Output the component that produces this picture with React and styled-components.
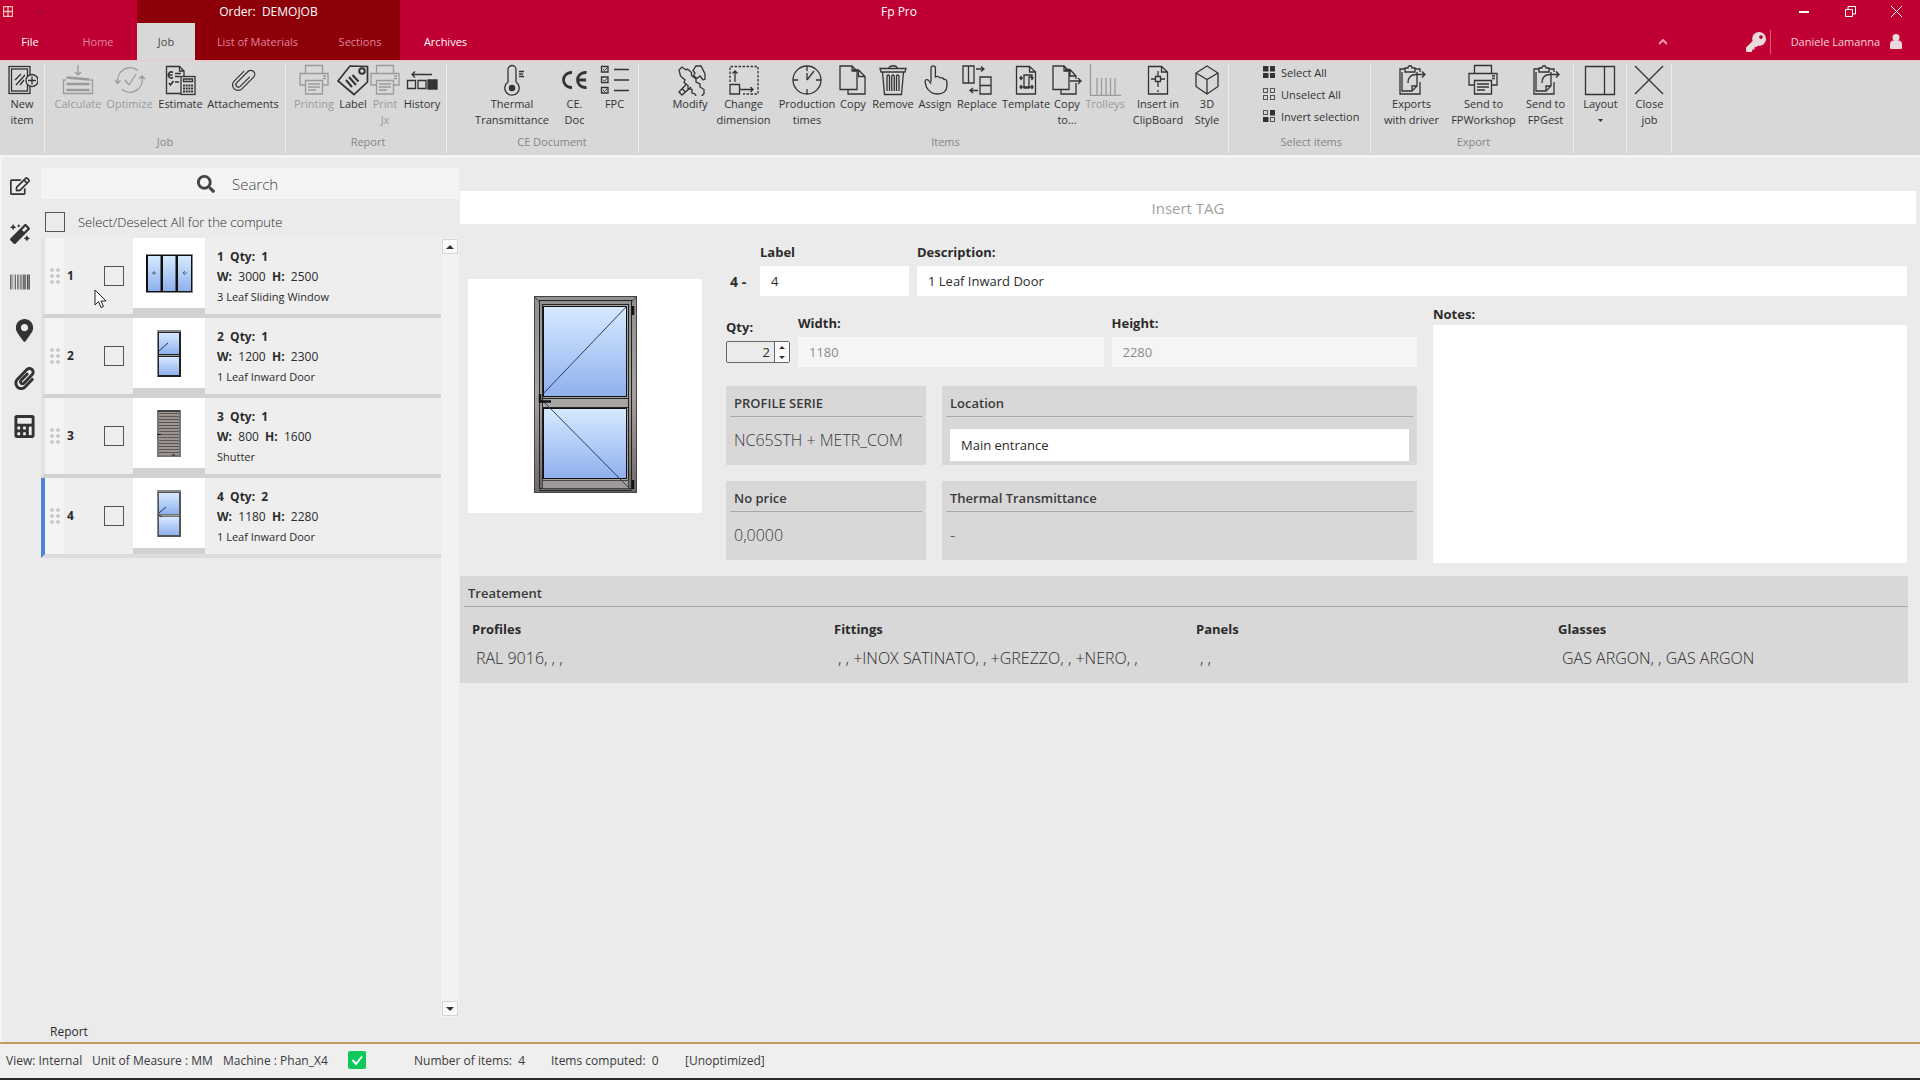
import React, { useState } from 'react';
import styled, { createGlobalStyle } from 'styled-components';
import { FaRegEdit, FaMagic, FaBarcode, FaMapMarkerAlt, FaPaperclip, FaCalculator, FaSearch, FaKey } from 'react-icons/fa';

const GlobalStyle = createGlobalStyle`
    * {
        box-sizing : border-box;
    }
    body {
        margin : 0;
        background : #ebebeb;
        color : #2b2b2b;
        font-family : "Open Sans", "Noto Sans", sans-serif;
        font-size : 12px;
    }
    button, input, textarea {
        font : inherit;
        color : inherit;
        border : 0;
        margin : 0;
        padding : 0;
        background : none;
        border-radius : 0;
        outline : 0;
    }
`;

const Page = styled.div`
    display : flex;
    flex-direction : column;
    min-height : 100vh;
`;

/* ---------- header ---------- */

const Header = styled.header`
    display : grid;
    grid-template-columns : 137px 263px 1fr;
    height : 60px;
    background : #c00032;
    color : #fff;
`;

const HeaderPart = styled.div`
    display : flex;
    flex-direction : column;
    background : ${props => (props.$dark ? "#8d000a" : "transparent")};
`;

const TitleLine = styled.div`
    display : flex;
    align-items : center;
    justify-content : ${props => props.$justify || "flex-start"};
    height : 23px;
    padding-left : ${props => props.$left || 0}px;
    gap : 24px;
    white-space : pre;
`;

const TabLine = styled.div`
    display : flex;
    flex : 1;
    font-size : 11px;
`;

const TabButton = styled.button`
    width : ${props => props.$w}px;
    color : ${props => (props.$active ? "#4a4a4a" : props.$soft ? "#e0849a" : "#fff")};
    background : ${props => (props.$active ? "#d8d8d8" : "transparent")};
    white-space : nowrap;
`;

const WindowTitle = styled.span`
    flex : 1;
    padding-left : 481px;
`;

const WindowButtons = styled.div`
    display : flex;
    gap : 22px;
    padding-right : 12px;
`;

const WindowButton = styled.button`
    display : flex;
    align-items : center;
    justify-content : center;
    width : 24px;
    height : 20px;
`;

const UserArea = styled.div`
    display : flex;
    align-items : center;
    margin-left : auto;
    padding-right : 18px;
    color : #f3d5dc;
`;

const CollapseButton = styled.button`
    display : flex;
    margin-right : 79px;
`;

const KeyButton = styled.button`
    display : flex;
    align-items : center;
    height : 24px;
    padding-right : 4px;
    margin-right : 20px;
    border-right : 1px solid #dc5c7c;
    font-size : 20px;
    color : #ead9dd;
`;

const UserButton = styled.button`
    display : flex;
    align-items : center;
    gap : 10px;
`;

/* ---------- ribbon ---------- */

const Ribbon = styled.nav`
    display : flex;
    height : 98px;
    padding-top : 3px;
    background : #d8d8d8;
    border-top : 1px solid #efc4cd;
    border-bottom : 3px solid #f3f3f3;
    font-size : 11px;
`;

const RibbonGroup = styled.section`
    display : flex;
    flex-direction : column;
    height : 89px;
    padding : 0 ${props => props.$right || 0}px 0 ${props => props.$left || 0}px;
    border-right : 1px solid #ececec;
`;

const RibbonItems = styled.div`
    display : flex;
    flex : 1;
`;

const GroupName = styled.div`
    height : 21px;
    line-height : 20px;
    text-align : center;
    color : #858585;
`;

const RibbonButton = styled.button`
    display : flex;
    flex-direction : column;
    align-items : center;
    width : ${props => props.$w}px;
    line-height : 16px;
    text-align : center;
    white-space : pre;
    color : ${props => (props.disabled ? "#9a9a9a" : "#333")};
`;

const RibbonIcon = styled.svg`
    flex : none;
    width : 32px;
    height : 32px;
    fill : none;
    stroke : currentColor;
    stroke-width : 1.3;
`;

const SelectList = styled.div`
    display : flex;
    flex-direction : column;
    flex : 1;
    gap : 6px;
`;

const SelectButton = styled.button`
    display : flex;
    align-items : center;
    gap : 6px;
    height : 16px;
    color : #333;
    white-space : nowrap;
`;

/* ---------- items on the left ---------- */

const Main = styled.main`
    display : flex;
    flex : 1;
    border-left : 2px solid #f5f5f5;
`;

const SideBar = styled.aside`
    display : flex;
    flex-direction : column;
    width : 39px;
    padding : 18px 0 0 8px;
    gap : 28px;
`;

const SideButton = styled.button`
    display : flex;
    align-items : center;
    height : 20px;
    padding-left : ${props => (props.$big ? 3 : 0)}px;
    font-size : ${props => (props.$big ? 23 : 20)}px;
    color : #333;
`;

const ListPanel = styled.section`
    display : flex;
    flex-direction : column;
    width : 418px;
    padding-top : 10px;
`;

const SearchBar = styled.label`
    display : flex;
    align-items : center;
    height : 31px;
    padding-left : 156px;
    gap : 17px;
    background : #f4f4f4;
    color : #444;
    font-size : 18px;
`;

const SearchInput = styled.input`
    flex : 1;
    min-width : 0;
    font-size : 15px;
    font-weight : 300;
    &::placeholder {
        color : #444;
        opacity : 1;
    }
`;

const SelectAll = styled.label`
    display : flex;
    align-items : center;
    height : 39px;
    padding : 7px 0 0 4px;
    gap : 13px;
    font-size : 13px;
    font-weight : 300;
`;

const CheckBox = styled.input`
    appearance : none;
    flex : none;
    width : 20px;
    height : 20px;
    border : 1px solid #555;
    &:checked {
        background : #4a86d8;
    }
`;

const ListBody = styled.div`
    display : flex;
    flex : 1;
`;

const ItemList = styled.ul`
    flex : 1;
    margin : 0;
    padding : 0;
    list-style : none;
`;

const ItemRow = styled.li`
    position : relative;
    display : flex;
    height : 80px;
    background : #eee;
    border-left : 4px solid ${props => (props.$current ? "#4a86d8" : "#e2e2e2")};
    border-bottom : 4px solid ${props => (props.$last ? "#dcdcdc" : "#d2d2d2")};
`;

const Grip = styled.div`
    display : grid;
    grid-template-columns : 4px 4px;
    grid-auto-rows : 4px;
    gap : 2px;
    align-content : center;
    justify-content : center;
    width : 19px;
    background : #f3f3f3;
`;

const Dot = styled.span`
    border-radius : 50%;
    background : #c9c9c9;
`;

const ItemNumber = styled.span`
    width : 40px;
    padding-left : 3px;
    line-height : 76px;
    font-weight : 700;
`;

const ItemCheck = styled.div`
    display : flex;
    align-items : center;
    width : 29px;
`;

const Thumb = styled.div`
    display : flex;
    align-items : center;
    justify-content : center;
    width : 72px;
    height : 76px;
    background : #fff;
    border-bottom : 6px solid #d2d2d2;
`;

const ItemText = styled.div`
    display : flex;
    flex-direction : column;
    padding : 9px 0 0 12px;
    line-height : 20px;
    white-space : pre;
`;

const ItemLine = styled.span`
    font-size : ${props => (props.$small ? 11 : 12)}px;
    font-weight : ${props => (props.$strong ? 700 : 400)};
`;

const Pointer = styled.svg`
    position : absolute;
    left : 49px;
    top : 51px;
`;

const ScrollBar = styled.div`
    display : flex;
    flex-direction : column;
    justify-content : space-between;
    width : 18px;
    padding : 1px;
    background : #f2f2f2;
`;

const ScrollButton = styled.button`
    display : flex;
    align-items : center;
    justify-content : center;
    height : 15px;
    border : 1px solid #d4d4d4;
    background : #fafafa;
`;

const ReportTab = styled.button`
    align-self : flex-start;
    height : 25px;
    padding : 4px 0 0 9px;
`;

/* ---------- detail on the right ---------- */

const Detail = styled.section`
    display : flex;
    flex-direction : column;
    flex : 1;
    min-width : 0;
    padding : 33px 4px 0 1px;
`;

const TagInput = styled.input`
    height : 33px;
    background : #fff;
    font-size : 15px;
    text-align : center;
    &::placeholder {
        color : #a0a0a0;
        opacity : 1;
    }
`;

const Form = styled.div`
    display : flex;
    padding : 19px 9px 13px 8px;
    gap : 24px;
`;

const Preview = styled.div`
    display : flex;
    align-items : center;
    justify-content : center;
    flex : none;
    width : 234px;
    height : 234px;
    margin-top : 36px;
    padding-bottom : 4px;
    background : #fff;
`;

const Fields = styled.div`
    flex : 1;
    min-width : 0;
`;

const FieldRow = styled.div`
    display : flex;
    gap : 8px;
    align-items : flex-end;
`;

const Prefix = styled.span`
    width : 26px;
    padding-left : 4px;
    line-height : 28px;
    font-size : 14px;
    font-weight : 700;
    white-space : nowrap;
`;

const Field = styled.div`
    display : flex;
    flex-direction : column;
    flex : ${props => (props.$w ? "none" : "1")};
    width : ${props => (props.$w ? props.$w + "px" : "auto")};
    min-width : 0;
`;

const FieldLabel = styled.label`
    height : 23px;
    line-height : 18px;
    font-size : 13px;
    font-weight : 700;
`;

const TextInput = styled.input`
    width : 100%;
    height : 30px;
    padding : 0 11px;
    font-size : 13px;
    font-weight : 400;
    background : #fff;
    &:disabled {
        background : #f5f5f5;
        color : #8b8b8b;
    }
`;

const LowerFields = styled.div`
    display : flex;
    gap : 16px;
    padding-top : 9px;
`;

const Measures = styled.div`
    flex : 691 1 0;
    min-width : 0;
    padding : 9px 0 3px;
`;

const Notes = styled.div`
    display : flex;
    flex-direction : column;
    flex : 474 1 0;
    min-width : 0;
`;

const NotesLabel = styled(FieldLabel)`
    height : 20px;
`;

const NotesArea = styled.textarea`
    flex : 1;
    resize : none;
    background : #fff;
`;

const SpinBox = styled.div`
    display : flex;
    height : 22px;
    margin-bottom : 4px;
    border : 1px solid #666;
    border-radius : 2px;
`;

const SpinInput = styled.input`
    flex : 1;
    min-width : 0;
    padding-right : 4px;
    text-align : right;
    font-size : 13px;
    border-right : 1px solid #666;
`;

const SpinButtons = styled.div`
    display : flex;
    flex-direction : column;
    width : 14px;
    background : #fafafa;
`;

const SpinButton = styled.button`
    display : flex;
    flex : 1;
    align-items : center;
    justify-content : center;
`;

const Cards = styled.div`
    display : grid;
    grid-template-columns : 200px 1fr;
    gap : 16px;
    padding-top : 19px;
`;

const Card = styled.section`
    height : 79px;
    padding : 4px 4px 0;
    background : #d8d8d8;
`;

const CardTitle = styled.h2`
    display : block;
    margin : 0;
    height : 27px;
    padding-left : 4px;
    border-bottom : 1px solid #a9a9a9;
    line-height : 26px;
    font-size : 13px;
    font-weight : 600;
    color : #3a3a3a;
`;

const CardValue = styled.div`
    padding : 11px 5px 0 4px;
    line-height : 24px;
    font-size : 16px;
    font-weight : 300;
    color : #3a3a3a;
    white-space : pre;
`;

const CardField = styled.div`
    display : flex;
    padding : 12px 4px 0;
`;

const CardInput = styled(TextInput)`
    height : 32px;
`;

const Treatment = styled.section`
    height : 107px;
    margin-right : 8px;
    padding-top : 4px;
    background : #d8d8d8;
`;

const TreatmentTitle = styled(CardTitle)`
    margin-left : 4px;
`;

const TreatmentColumns = styled.div`
    display : grid;
    grid-template-columns : repeat(4, 1fr);
    padding-top : 11px;
`;

const TreatmentColumn = styled.div`
    padding-left : 12px;
`;

const TreatmentName = styled.h3`
    margin : 0;
    line-height : 22px;
    font-size : 13px;
    font-weight : 700;
`;

const TreatmentValue = styled.div`
    padding : 6px 0 0 4px;
    line-height : 24px;
    font-size : 16px;
    font-weight : 300;
    white-space : pre;
`;

/* ---------- status bar ---------- */

const StatusBar = styled.footer`
    display : flex;
    align-items : center;
    height : 38px;
    padding : 0 0 2px 6px;
    border-top : 2px solid #c39a63;
    border-bottom : 2px solid #2b2728;
    background : #efefef;
    color : #3a3a3a;
    white-space : pre;
`;

const StatusText = styled.span`
    width : ${props => props.$w}px;
`;

const StatusCheck = styled.span`
    display : flex;
    width : 66px;
`;

/* ---------- drawings ---------- */

const icons = {
    newItem: <>
        <rect x="3" y="2.5" width="21" height="27" /><rect x="5.5" y="5" width="16" height="22" />
        <path d="M9 16l6-6M10 21l9-10M14 21l4-5" />
        <circle cx="26" cy="16.5" r="6" fill="#d8d8d8" /><path d="M22 16.5h8M26 12.5v8" />
    </>,
    calculate: <>
        <path d="M16 1v10M13 8l3 3 3-3M4 16H1.5v13.5h29V16H28" />
        <path d="M4.5 13.5l23 2M4.5 20h23M4.5 26h23" strokeWidth="2.6" />
    </>,
    optimize: <>
        <path d="M4 19A12.5 12.5 0 0 1 24 6.5M28 13A12.5 12.5 0 0 1 8 25.5M1 16l2.5 3.5 3-3M25 15l3-3 3 3M11 16l4 5 7-11" />
    </>,
    estimate: <>
        <path d="M1.5 2.5h13L19 7v22.5H1.5z" /><path d="M14.5 2.5V7H19" />
        <path d="M10 9.5h6M10 12.5h5M10 18h4M8 8.5a3 3 0 1 0 0 5M3.5 11h4M4 19l1.5 2 3-4" strokeWidth="1.6" />
        <rect x="16" y="12.5" width="14" height="18" fill="#d8d8d8" />
        <path d="M18.5 15h9v2.5h-9z" /><path d="M18 21.5h10M18 24.5h10M18 27.5h10" strokeWidth="2" strokeDasharray="2 .7" />
    </>,
    clip: <path transform="rotate(45 16 16)" strokeWidth="1.2" d="M18.5 9v13.5a2.5 2.5 0 0 1-5 0V6.5a4 4 0 0 1 8 0V23a5.5 5.5 0 0 1-11 0V9" />,
    printer: <path d="M7.5 9.5V1.5h17v8M7.5 21H2V9.5h28V21h-5.5M7.5 16.5h17v13.5h-17zM10 20h12M10 23h12M10 26h8M25 12h3M25 14.5h3" />,
    label: <>
        <path d="M1 17L13 2l17.500.5V18L17 30.5z" strokeWidth="1.7" /><circle cx="25" cy="7" r="2.8" strokeWidth="2" />
        <path d="M9 16l6 7M12 13l7 8M15.5 11l6 6.5" strokeWidth="2" />
    </>,
    history: <>
        <path d="M6 10.5h20M9 7.5l-3 3 3 3M1.5 16.5h8v8h-8zM12 16.5h8v8h-8z" /><path d="M22 16h9v9h-9z" fill="#333" />
    </>,
    thermo: <>
        <path d="M12 18V5.5a4 4 0 0 1 8 0V18a7.2 7.2 0 1 1-8 0z" /><circle cx="16" cy="24" r="2.6" fill="#333" /><path d="M23 7.5h5M23 10h4M23 12.5h5" />
    </>,
    ce: <path d="M13 8.5H12a7.5 7.5 0 0 0 0 15h1M27.5 8.5H26a7.5 7.5 0 0 0 0 15h1.5M19 16h8" strokeWidth="2.8" />,
    fpc: <>
        <path d="M2.5 2.5h6.5v5.5H2.5zM2.5 13h6.5v5.5H2.5zM2.5 23.5h6.5V29H2.5zM15 5.5h15M15 16h15M15 26.5h15" />
        <path d="M4 5l1.5 1.5 3-3M4 15.5l1.5 1.5 3-3M4 26l1.5 1.5 3-3" strokeWidth="1" />
    </>,
    modify: <>
        <path d="M5 6l3-3 4 3 1.5-1 4 3.5v3l4.5 3.5v3l4 2v3l4 2.5v4l-3 3.5h-4.5l-1.5-3-3-1v-3.5l-4-1v-3l-4-3 1-2.5-4.500-4z" />
        <path d="M19 6.5L22 2h5l4 8v5l-2 1-3-4-3 2.5-3.5-3 1.5-2.500zM12.5 20L5 28l3 3 9-8M8 24.5l3 3" />
    </>,
    dimension: <>
        <path d="M2 18V2.5h28V30H15" strokeDasharray="2.5 1.5" /><path d="M2 20.5h9.5V30H2zM7 18V7M4.5 9.5L7 7l2.5 2.5M12 25.5h13M22.5 23l2.5 2.5-2.500 2.5" />
    </>,
    clock: <><circle cx="16" cy="16" r="14" /><path d="M16 2v5M16 25v5M2 16h5M25 16h5M16 16V9M16 16l7-9" /></>,
    copy: <><path d="M3 2h12l5 5v18.5H3z" /><path d="M15 2v5h5M16 5.5l5.500.5 6.500 6.5v17.5H11V26M21.5 6v6.5H28" /></>,
    remove: <path d="M3 4.5h26L28 8H4zM12 4c0-3 8-3 8 0M5.5 8l2 22.5h17l2-22.500M10 27V12q1.250-2 2.5 0v15M14.75 27V12q1.250-2 2.5 0v15M19.5 27V12q1.250-2 2.5 0v15" />,
    assign: <path d="M12 18V4a2.2 2.2 0 0 1 4.4 0v9c2-1 4-.5 4.500 1 2-.8 3.500 0 4 1.5 1.500-.5 3 .5 3 2.5v4c0 5-4 8-9 8s-9-2-11.500-7L6 18c0-2.500 2.500-3.500 4-1l2 3" />,
    replace: <path d="M2 2h11v17H2zM7.5 2v17M15 5h8M20 2.5L23 5l-3 2.5M19 13h11v17H19zM19 21.5h11M9 26.5h8M12 24l-3 2.5 3 2.5" />,
    template: <path d="M6.5 2.5h13L25.5 8v22h-19zM19.5 2.5V8h6M14 11h8v2h-3v11h-5zM10 14h3M21 14h2M10 23h13M11.5 12L10 14l1.5 2M21.5 12l1.5 2-1.500 2M11.5 21L10 23l1.5 2M21.5 21l1.5 2-1.500 2" />,
    copyTo: <path d="M2 2h11l5 5v18.5H2zM13 2v5h5M14 5.5h5l6 6.5v3M25 19v11H10V26M19 5.5V12h6M19 17h11M27 14l3 3-3 3" />,
    trolleys: <path d="M1.5 0v31.5H32M8 31V14M12.5 31V14M17 31V14M21.5 31V14M26 31V14" />,
    clipboard: <path d="M6.5 2.5h13L25.5 8v22h-19zM19.5 2.5V8h6M13.5 12.5h5v5h-5zM16 12V7M16 18v5M13 15h-4M19 15h4M16 26v2" />,
    cube: <path d="M16 2l11 7v13.5L16 30 5 22.5V9zM5 9l11 6.5L27 9M16 15.5V30" />,
    exportDoc: <>
        <path d="M10 5H5v25h20V18M25 8V5h-5M10 8V4h3c0-3 4-3 4 0h3v4zM7 8v19h10l5-5V8" /><path d="M17 27v-5h5M13 19c0-6 3-8.500 8-8.500h9M27 7.5l3 3-3 3" />
    </>,
    layout: <path d="M1.5 2.5h29v28h-29zM20.5 2.5v28" />,
    close: <path d="M2 2l28 28M30 2L2 30" />,
};

const selectIcons = {
    all: [1, 1, 1, 1],
    none: [0, 0, 0, 0],
    invert: [0, 1, 1, 0],
};

function SelectIcon({ kind }) {
    return (
        <svg width="12" height="12" viewBox="0 0 12 12" aria-hidden="true">
            {selectIcons[kind].map((on, i) => {
                const x = (i % 2) * 7;
                const y = i > 1 ? 7 : 0;
                return on
                    ? <rect key={i} x={x} y={y} width="5.5" height="5.5" fill="#333" />
                    : <rect key={i} x={x + 0.5} y={y + 0.5} width="4" height="4" fill="none" stroke="#555" />
            })}
        </svg>
    )
}

function Arrow({ down, size = 8 }) {
    return (
        <svg width={size} height={size / 2} viewBox="0 0 8 4" aria-hidden="true">
            <path d={down ? "M0 0h8L4 4z" : "M0 4h8L4 0z"} fill="#333" />
        </svg>
    )
}

const HiddenSvg = styled.svg`
    position : absolute;
`;

function Gradients() {
    return (
        <HiddenSvg width="0" height="0" aria-hidden="true">
            <defs>
                <linearGradient id="glass" x1="0" y1="0" x2="0" y2="1">
                    <stop offset="0" stopColor="#d6eaff" /><stop offset="1" stopColor="#8fb0ee" />
                </linearGradient>
                <linearGradient id="frame" x1="0" y1="0" x2="0" y2="1">
                    <stop offset="0" stopColor="#8f9090" /><stop offset="0.5" stopColor="#a6a19e" /><stop offset="1" stopColor="#6f6866" />
                </linearGradient>
            </defs>
        </HiddenSvg>
    )
}

function SlidingWindow() {
    return (
        <svg width="47" height="39" viewBox="0 0 47 39">
            <rect width="47" height="39" fill="#111" />
            <path d="M0 0h47v1H0zM46 0h1v39h-1zM0 38h47v1H0z" fill="#888" />
            <rect x="2" y="2" width="12.5" height="35" fill="url(#glass)" />
            <rect x="17" y="2" width="12.5" height="35" fill="url(#glass)" />
            <rect x="32" y="2" width="13" height="35" fill="url(#glass)" />
            <path d="M6 19h4M8 17v4M37 19h4M39 17l-2 2 2 2" stroke="#456" strokeWidth="0.8" fill="none" />
        </svg>
    )
}

function SmallDoor({ open }) {
    return (
        <svg width="24" height="47" viewBox="0 0 24 47">
            <rect width="24" height="47" fill={open ? "#555" : "#222"} />
            <path d="M0 0h24v2H0zM0 0h1v47H0z" fill="#888" />
            <rect x="2" y="3" width="20" height="21" fill="url(#glass)" />
            <rect x="2" y="27" width="20" height="18" fill="url(#glass)" />
            <path d="M2 25.5h20" stroke="#999" strokeWidth={open ? 2 : 1} />
            <path d={open ? "M2 23l7-6M1 24l4 3" : "M2 21l9-8"} stroke="#234" strokeWidth="1" />
        </svg>
    )
}

function Shutter() {
    const slats = Array.from({ length: 14 }, (_, i) => 3 + i * 3);
    return (
        <svg width="24" height="47" viewBox="0 0 24 47">
            <rect width="24" height="47" fill="#777" />
            <rect x="2" y="2" width="20" height="43" fill="#9b9491" />
            {slats.map(y => <path key={y} d={`M2 ${y}.5h20`} stroke="#5c5756" strokeWidth="1" />)}
            <path d="M1 1h22M0 24.5h4M15 45h3" stroke="#111" strokeWidth="1" />
        </svg>
    )
}

function BigDoor() {
    return (
        <svg width="103" height="197" viewBox="0 0 103 197">
            <rect x="0.5" y="0.5" width="102" height="196" fill="url(#frame)" stroke="#444" />
            <path d="M0 0l8 9M103 0l-8 9" stroke="#444" />
            <rect x="5.5" y="4.5" width="92" height="188" fill="url(#frame)" stroke="#222" />
            <rect x="8.5" y="8.5" width="86" height="184" fill="#a8a6a5" stroke="#222" />
            <rect x="9.5" y="10.5" width="83" height="90" fill="url(#glass)" stroke="#111" />
            <rect x="8.5" y="102.5" width="86" height="9" fill="#a9a5a3" stroke="#222" />
            <rect x="9.5" y="112.5" width="83" height="70" fill="url(#glass)" stroke="#111" />
            <rect x="8.5" y="184.5" width="86" height="8" fill="#9d9a99" stroke="#444" />
            <path d="M5 194.5h93" stroke="#222" />
            <path d="M93 10L9 98M9 105l86 87" stroke="#2c3c5c" />
            <path d="M6 98v9M5 105.5h12" stroke="#111" strokeWidth="2.5" />
            <path d="M99 10v9M99 184v9" stroke="#111" strokeWidth="2.5" />
        </svg>
    )
}

/* ---------- data ---------- */

const groups = [
    { name: "", buttons: [{ w: 44, text: "New\nitem", icon: "newItem" }] },
    { name: "Job", left: 6, right: 6, buttons: [
        { w: 54, text: "Calculate", icon: "calculate", off: true },
        { w: 49, text: "Optimize", icon: "optimize", off: true },
        { w: 53, text: "Estimate", icon: "estimate" },
        { w: 72, text: "Attachements", icon: "clip" },
    ] },
    { name: "Report", left: 6, right: 2, buttons: [
        { w: 44, text: "Printing", icon: "printer", off: true },
        { w: 34, text: "Label", icon: "label" },
        { w: 30, text: "Print\nJx", icon: "printer", off: true },
        { w: 44, text: "History", icon: "history" },
    ] },
    { name: "CE Document", left: 25, right: 6, buttons: [
        { w: 80, text: "Thermal\nTransmittance", icon: "thermo" },
        { w: 45, text: "CE.\nDoc", icon: "ce" },
        { w: 35, text: "FPC", icon: "fpc" },
    ] },
    { name: "Items", left: 29, right: 5, buttons: [
        { w: 44, text: "Modify", icon: "modify" },
        { w: 63, text: "Change\ndimension", icon: "dimension" },
        { w: 64, text: "Production\ntimes", icon: "clock" },
        { w: 28, text: "Copy", icon: "copy" },
        { w: 52, text: "Remove", icon: "remove" },
        { w: 32, text: "Assign", icon: "assign" },
        { w: 52, text: "Replace", icon: "replace" },
        { w: 46, text: "Template", icon: "template" },
        { w: 36, text: "Copy\nto...", icon: "copyTo" },
        { w: 40, text: "Trolleys", icon: "trolleys", off: true },
        { w: 66, text: "Insert in\nClipBoard", icon: "clipboard" },
        { w: 32, text: "3D\nStyle", icon: "cube" },
    ] },
    { name: "Select items", left: 34, right: 11, select: true },
    { name: "Export", left: 4, right: 2, buttons: [
        { w: 72, text: "Exports\nwith driver", icon: "exportDoc" },
        { w: 72, text: "Send to\nFPWorkshop", icon: "printer" },
        { w: 52, text: "Send to\nFPGest", icon: "exportDoc" },
    ] },
    { name: "", buttons: [{ w: 52, text: "Layout", icon: "layout", menu: true }] },
    { name: "", buttons: [{ w: 44, text: "Close\njob", icon: "close" }] },
];

const items = [
    { qty: 1, w: 3000, h: 2500, name: "3 Leaf Sliding Window", pic: <SlidingWindow /> },
    { qty: 1, w: 1200, h: 2300, name: "1 Leaf Inward Door", pic: <SmallDoor /> },
    { qty: 1, w: 800, h: 1600, name: "Shutter", pic: <Shutter /> },
    { qty: 2, w: 1180, h: 2280, name: "1 Leaf Inward Door", pic: <SmallDoor open /> },
];

const treatments = [
    { name: "Profiles", value: "RAL 9016, , ," },
    { name: "Fittings", value: ", , +INOX SATINATO, , +GREZZO, , +NERO, ," },
    { name: "Panels", value: ", ," },
    { name: "Glasses", value: "GAS ARGON, , GAS ARGON" },
];

const sideButtons = [
    { name: "Edit", icon: <FaRegEdit /> },
    { name: "Wizard", icon: <FaMagic /> },
    { name: "Barcode", icon: <FaBarcode /> },
    { name: "Location", icon: <FaMapMarkerAlt />, big: true },
    { name: "Attachments", icon: <FaPaperclip />, big: true },
    { name: "Calculator", icon: <FaCalculator />, big: true },
];

function TopBar() {
    return (
        <Header>
            <HeaderPart>
                <TitleLine $left={3}>
                    <svg width="10" height="11" viewBox="0 0 10 11" aria-hidden="true">
                        <path d="M0.5 0.5h9v10h-9zM5 0v11M0 5.5h10" fill="none" stroke="#f6c3b5" strokeWidth="1.3" />
                    </svg>
                    <svg width="6" height="4" viewBox="0 0 8 4" aria-hidden="true"><path d="M0 0h8L4 4z" fill="#8c1735" /></svg>
                </TitleLine>
                <TabLine>
                    <TabButton $w={60}>File</TabButton>
                    <TabButton $w={76} $soft>Home</TabButton>
                </TabLine>
            </HeaderPart>
            <HeaderPart $dark>
                <TitleLine $justify="center">{"Order:  DEMOJOB"}</TitleLine>
                <TabLine>
                    <TabButton $w={58} $active>Job</TabButton>
                    <TabButton $w={125} $soft>List of Materials</TabButton>
                    <TabButton $w={80} $soft>Sections</TabButton>
                </TabLine>
            </HeaderPart>
            <HeaderPart>
                <TitleLine>
                    <WindowTitle>Fp Pro</WindowTitle>
                    <WindowButtons>
                        <WindowButton aria-label="Minimize"><svg width="10" height="2"><path d="M0 1h10" stroke="#fff" strokeWidth="2" /></svg></WindowButton>
                        <WindowButton aria-label="Restore"><svg width="11" height="11" fill="none" stroke="#fff"><path d="M.5 3.5h7v7h-7zM3 3V.5h7.5V8H8" /></svg></WindowButton>
                        <WindowButton aria-label="Close"><svg width="11" height="11" stroke="#fff"><path d="M0 0l11 11M11 0L0 11" /></svg></WindowButton>
                    </WindowButtons>
                </TitleLine>
                <TabLine>
                    <TabButton $w={91}>Archives</TabButton>
                    <UserArea>
                        <CollapseButton aria-label="Collapse">
                            <svg width="8" height="6" fill="none" stroke="#e8a0b0" strokeWidth="2"><path d="M0 5l4-4 4 4" /></svg>
                        </CollapseButton>
                        <KeyButton aria-label="Key"><FaKey /></KeyButton>
                        <UserButton>
                            Daniele Lamanna
                            <svg width="12" height="15" viewBox="0 0 12 15" fill="#ead9dd"><circle cx="6" cy="3.5" r="3.5" /><path d="M0 14V10c0-2 2-3.500 3-3.500h6c1 0 3 1.5 3 3.5v4q0 1-1 1H1q-1 0-1-1z" /></svg>
                        </UserButton>
                    </UserArea>
                </TabLine>
            </HeaderPart>
        </Header>
    )
}

function RibbonBar() {
    return (
        <Ribbon>
            {groups.map((group, i) => (
                <RibbonGroup key={i} $left={group.left} $right={group.right}>
                    <RibbonItems>
                        {group.select
                            ?
                            <SelectList>
                                <SelectButton><SelectIcon kind="all" />Select All</SelectButton>
                                <SelectButton><SelectIcon kind="none" />Unselect All</SelectButton>
                                <SelectButton><SelectIcon kind="invert" />Invert selection</SelectButton>
                            </SelectList>
                            :
                            group.buttons.map(b => (
                                <RibbonButton key={b.text} $w={b.w} disabled={b.off}>
                                    <RibbonIcon viewBox="0 0 32 32" aria-hidden="true">{icons[b.icon]}</RibbonIcon>
                                    {b.text}
                                    {b.menu && <svg width="5" height="16" viewBox="0 0 5 16"><path d="M0 7h5l-2.500 3z" fill="#333" /></svg>}
                                </RibbonButton>
                            ))
                        }
                    </RibbonItems>
                    <GroupName>{group.name}</GroupName>
                </RibbonGroup>
            ))}
        </Ribbon>
    )
}

function Items() {
    return (
        <ListPanel>
            <SearchBar>
                <FaSearch />
                <SearchInput type="text" placeholder="Search" aria-label="Search" />
            </SearchBar>
            <SelectAll>
                <CheckBox type="checkbox" />
                Select/Deselect All for the compute
            </SelectAll>
            <ListBody>
                <ItemList>
                    {items.map((item, i) => (
                        <ItemRow key={i} $current={i === 3} $last={i === 3}>
                            <Grip>{[0, 1, 2, 3, 4, 5].map(n => <Dot key={n} />)}</Grip>
                            <ItemNumber>{i + 1}</ItemNumber>
                            <ItemCheck><CheckBox type="checkbox" aria-label={item.name} /></ItemCheck>
                            <Thumb>{item.pic}</Thumb>
                            <ItemText>
                                <ItemLine $strong>{`${i + 1}  Qty:  ${item.qty}`}</ItemLine>
                                <ItemLine><b>W:</b>{`  ${item.w}  `}<b>H:</b>{`  ${item.h}`}</ItemLine>
                                <ItemLine $small>{item.name}</ItemLine>
                            </ItemText>
                            {i === 0 &&
                                <Pointer width="13" height="20" viewBox="0 0 13 20">
                                    <path d="M1 1v15l3.5-3.500L7 18.5l2.5-1L7 12h5z" fill="#fff" stroke="#222" />
                                </Pointer>
                            }
                        </ItemRow>
                    ))}
                </ItemList>
                <ScrollBar>
                    <ScrollButton aria-label="Scroll up"><Arrow /></ScrollButton>
                    <ScrollButton aria-label="Scroll down"><Arrow down /></ScrollButton>
                </ScrollBar>
            </ListBody>
            <ReportTab>Report</ReportTab>
        </ListPanel>
    )
}

function ItemDetail() {
    const [qty, setQty] = useState(2)
    return (
        <Detail>
            <TagInput type="text" placeholder="Insert TAG" aria-label="Insert TAG" />
            <Form>
                <Preview><BigDoor /></Preview>
                <Fields>
                    <FieldRow>
                        <Prefix>4 -</Prefix>
                        <Field $w={149}>
                            <FieldLabel htmlFor="label">Label</FieldLabel>
                            <TextInput id="label" defaultValue="4" />
                        </Field>
                        <Field>
                            <FieldLabel htmlFor="description">Description:</FieldLabel>
                            <TextInput id="description" defaultValue="1 Leaf Inward Door" />
                        </Field>
                    </FieldRow>
                    <LowerFields>
                        <Measures>
                            <FieldRow>
                                <Field $w={64}>
                                    <FieldLabel htmlFor="qty">Qty:</FieldLabel>
                                    <SpinBox>
                                        <SpinInput id="qty" value={qty} onChange={e => setQty(Number(e.target.value) || 0)} />
                                        <SpinButtons>
                                            <SpinButton aria-label="More" onClick={() => setQty(qty + 1)}><Arrow size={6} /></SpinButton>
                                            <SpinButton aria-label="Less" onClick={() => setQty(qty - 1)}><Arrow size={6} down /></SpinButton>
                                        </SpinButtons>
                                    </SpinBox>
                                </Field>
                                <Field>
                                    <FieldLabel htmlFor="width">Width:</FieldLabel>
                                    <TextInput id="width" defaultValue="1180" disabled />
                                </Field>
                                <Field>
                                    <FieldLabel htmlFor="height">Height:</FieldLabel>
                                    <TextInput id="height" defaultValue="2280" disabled />
                                </Field>
                            </FieldRow>
                            <Cards>
                                <Card>
                                    <CardTitle>PROFILE SERIE</CardTitle>
                                    <CardValue>NC65STH + METR_COM</CardValue>
                                </Card>
                                <Card>
                                    <CardTitle as="label" htmlFor="location">Location</CardTitle>
                                    <CardField><CardInput id="location" defaultValue="Main entrance" /></CardField>
                                </Card>
                                <Card>
                                    <CardTitle>No price</CardTitle>
                                    <CardValue>0,0000</CardValue>
                                </Card>
                                <Card>
                                    <CardTitle>Thermal Transmittance</CardTitle>
                                    <CardValue>-</CardValue>
                                </Card>
                            </Cards>
                        </Measures>
                        <Notes>
                            <NotesLabel htmlFor="notes">Notes:</NotesLabel>
                            <NotesArea id="notes" />
                        </Notes>
                    </LowerFields>
                </Fields>
            </Form>
            <Treatment>
                <TreatmentTitle>Treatement</TreatmentTitle>
                <TreatmentColumns>
                    {treatments.map(t => (
                        <TreatmentColumn key={t.name}>
                            <TreatmentName>{t.name}</TreatmentName>
                            <TreatmentValue>{t.value}</TreatmentValue>
                        </TreatmentColumn>
                    ))}
                </TreatmentColumns>
            </Treatment>
        </Detail>
    )
}

function Status() {
    return (
        <StatusBar>
            <StatusText $w={86}>View: Internal</StatusText>
            <StatusText $w={131}>Unit of Measure : MM</StatusText>
            <StatusText $w={125}>Machine : Phan_X4</StatusText>
            <StatusCheck>
                <svg width="18" height="18" viewBox="0 0 18 18" aria-label="Connected">
                    <rect width="18" height="18" rx="2" fill="#0cc95c" /><path d="M4.5 9l3.5 4 6-7.500" fill="none" stroke="#fff" strokeWidth="2" />
                </svg>
            </StatusCheck>
            <StatusText $w={137}>{"Number of items:  4"}</StatusText>
            <StatusText $w={134}>{"Items computed:  0"}</StatusText>
            <StatusText $w={90}>[Unoptimized]</StatusText>
        </StatusBar>
    )
}

export default function App() {
    return (
        <Page>
            <GlobalStyle />
            <Gradients />
            <TopBar />
            <RibbonBar />
            <Main>
                <SideBar>
                    {sideButtons.map(b => <SideButton key={b.name} $big={b.big} aria-label={b.name}>{b.icon}</SideButton>)}
                </SideBar>
                <Items />
                <ItemDetail />
            </Main>
            <Status />
        </Page>
    )
}
